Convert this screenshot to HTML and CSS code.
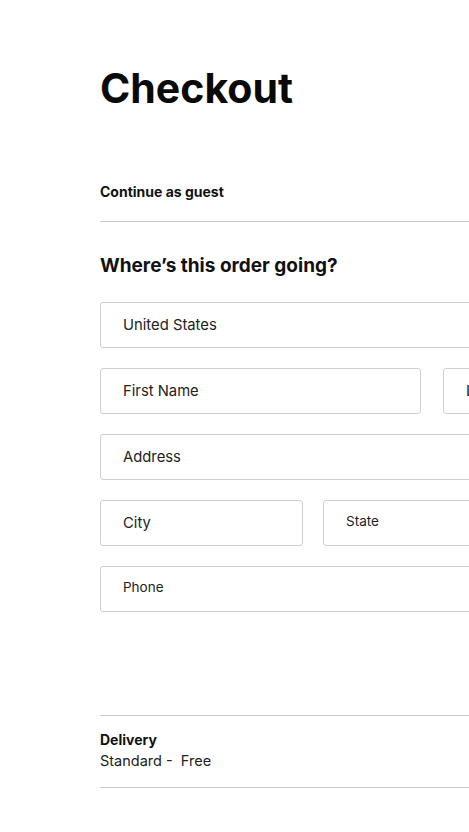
FILE: index.html
```html
<!DOCTYPE html>
<html>
<head>
<meta charset="utf-8">
<link rel="stylesheet" href="styles.css">
</head>
<body>
<main class="page">
  <h1 class="title">Checkout</h1>
  <div class="guest">Continue as guest</div>
  <hr class="rule">
  <h2 class="subtitle">Where’s this order going?</h2>
  <form class="form">
    <div class="field full">United States</div>
    <div class="row two">
      <div class="field">First Name</div>
      <div class="field">Last Name</div>
    </div>
    <div class="field full">Address</div>
    <div class="row three">
      <div class="field">City</div>
      <div class="field select">State</div>
      <div class="field">Zip Code</div>
    </div>
    <div class="field full small">Phone</div>
  </form>
  <section class="delivery">
    <div class="delivery-title">Delivery</div>
    <div class="delivery-text">Standard -&nbsp; Free</div>
  </section>
</main>
</body>
</html>
```
FILE: styles.css
```css
html, body {
  margin: 0;
  padding: 0;
  background: #fff;
  overflow: hidden;
}
body {
  font-family: Inter, "Noto Sans", sans-serif;
  color: #111;
}
.page {
  width: 664px;
  padding: 63px 0 0 100px;
}
.title {
  margin: 0;
  font-size: 41px;
  line-height: 50px;
  font-weight: 700;
  color: #0a0a0a;
}
.guest {
  margin-top: 70px;
  font-size: 14px;
  line-height: 17px;
  font-weight: 700;
}
.rule {
  margin: 21px 0 0 0;
  border: 0;
  border-top: 1px solid #c8c8c8;
  height: 0;
}
.subtitle {
  margin: 32px 0 0 0;
  font-size: 19px;
  line-height: 24px;
  font-weight: 700;
}
.form {
  margin-top: 24px;
  display: flex;
  flex-direction: column;
  gap: 20px;
}
.row {
  display: grid;
  gap: 22px;
}
.row.two { grid-template-columns: 321px 321px; }
.row.three { grid-template-columns: 203px 203px 203px; gap: 20px; }
.field {
  box-sizing: border-box;
  height: 46px;
  border: 1px solid #cfcfcf;
  border-radius: 3px;
  padding: 0 22px;
  display: flex;
  align-items: center;
  font-size: 14.8px;
  color: #222;
}
.field.select { font-size: 13.5px; padding-bottom: 4px; }
.field.small { font-size: 13.5px; padding-bottom: 4px; }
.delivery {
  margin-top: 103px;
  border-top: 1px solid #c8c8c8;
  border-bottom: 1px solid #c8c8c8;
  padding: 14px 0 15px;
}
.delivery-title {
  font-size: 14px;
  line-height: 20px;
  font-weight: 700;
}
.delivery-text {
  font-size: 14.5px;
  line-height: 22px;
  color: #222;
}
```
